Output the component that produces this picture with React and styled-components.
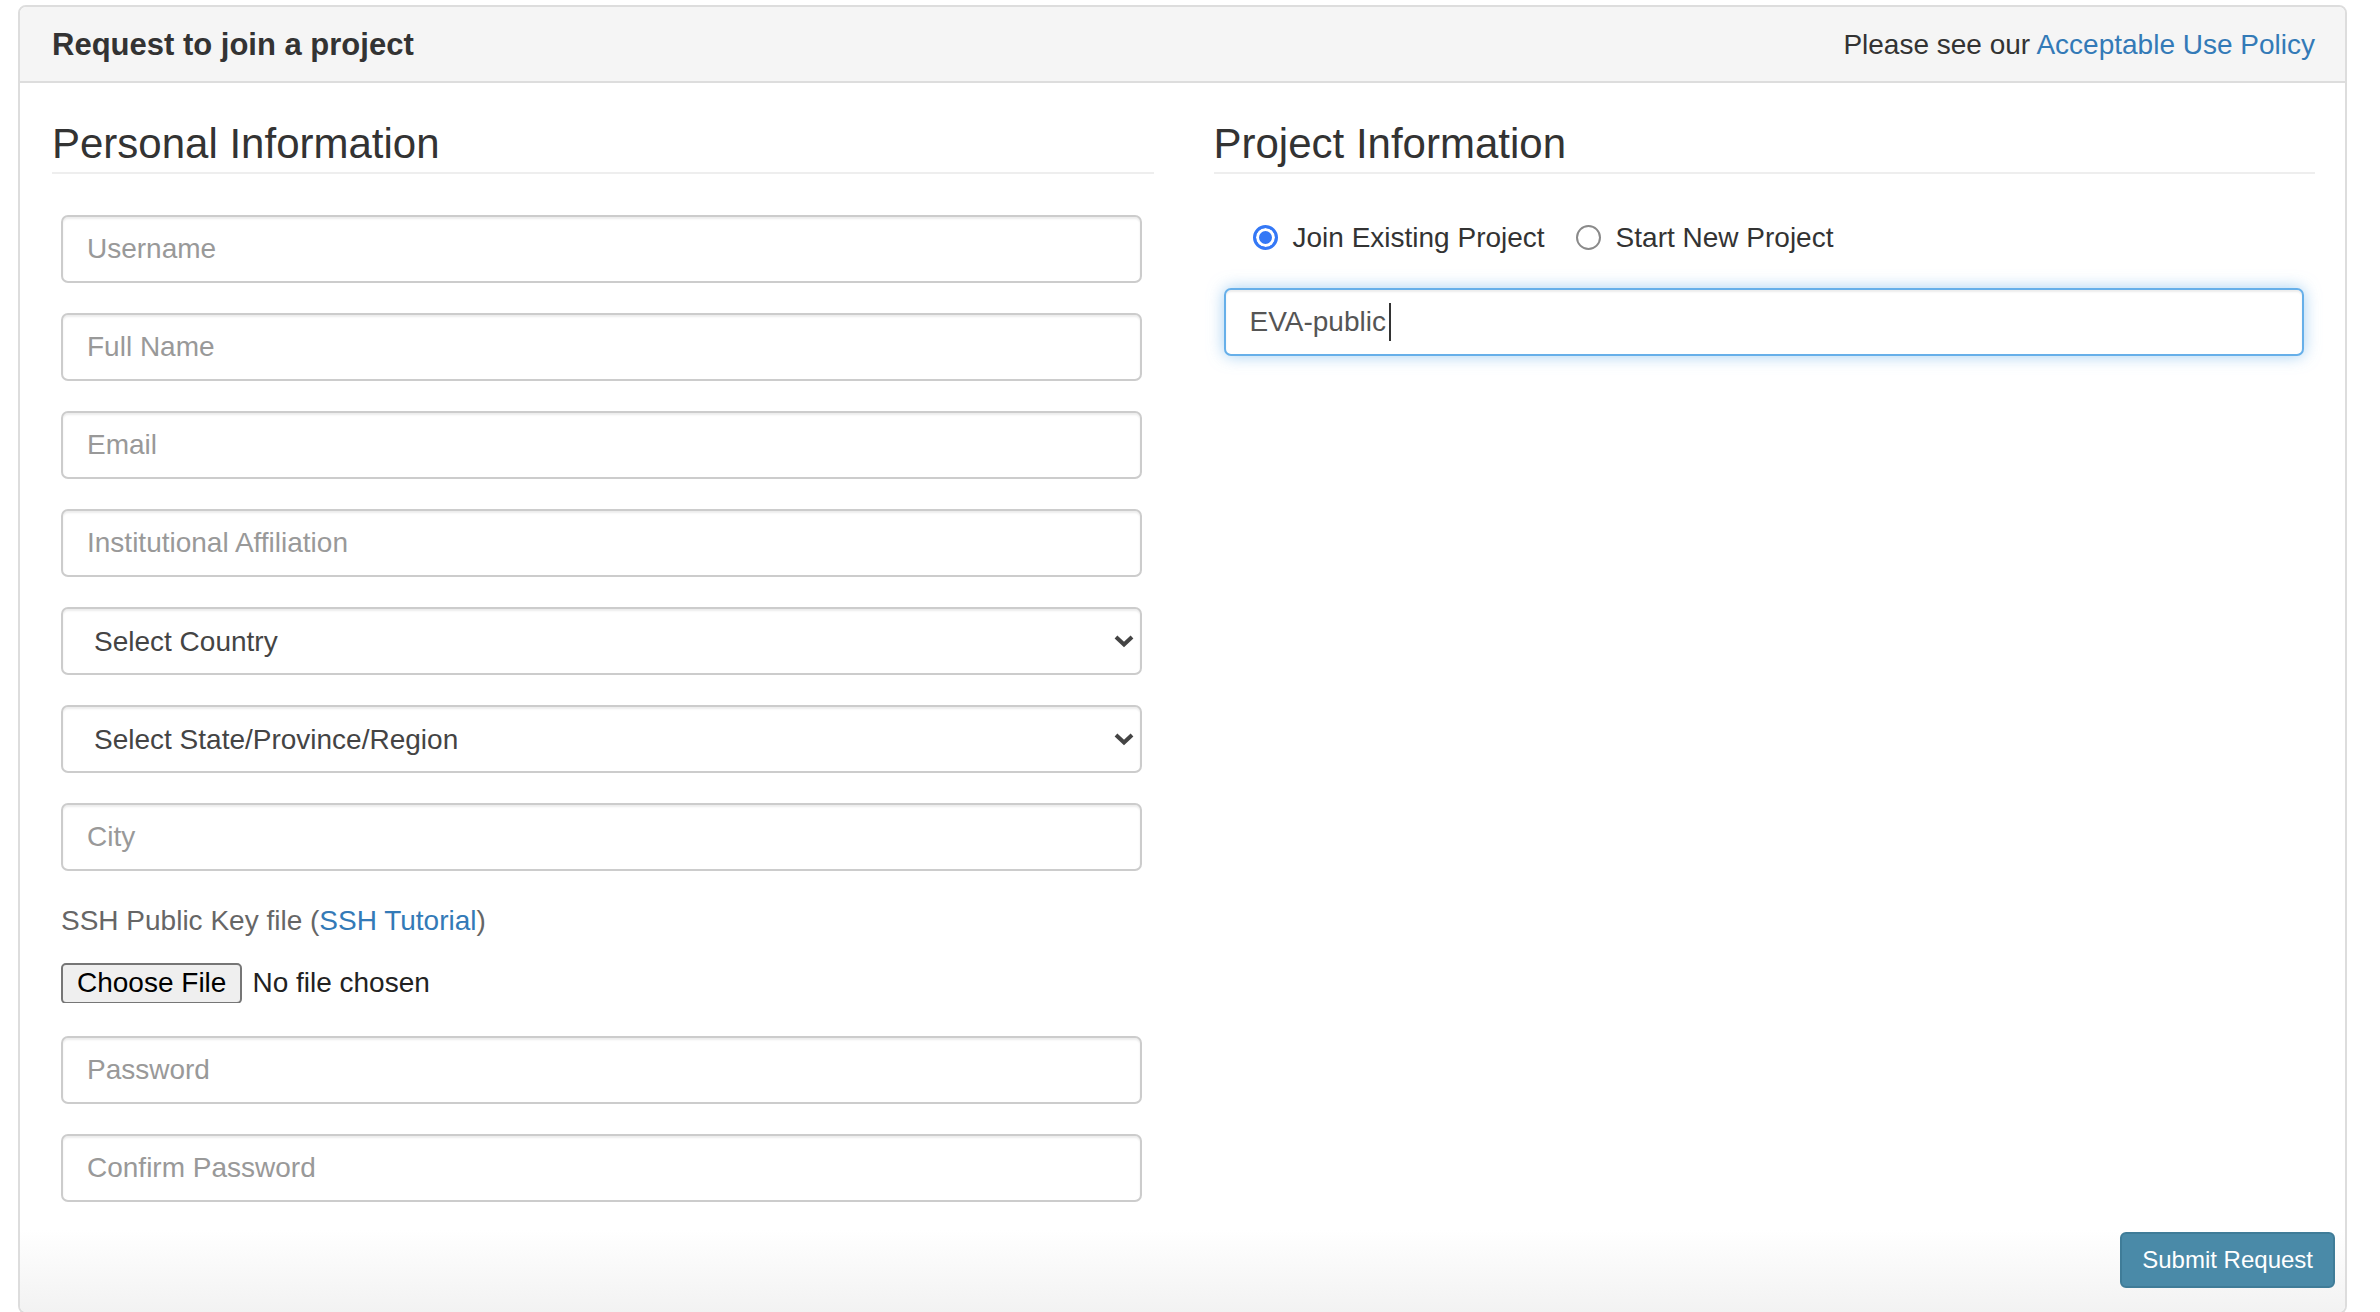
import styled, { createGlobalStyle } from 'styled-components';

const GlobalStyle = createGlobalStyle`
  html, body {
    margin: 0;
    height: 100%;
    overflow: hidden;
    background: #fff;
  }
  body {
    font-family: "Liberation Sans", Arial, Helvetica, sans-serif;
    font-size: 28px;
    line-height: 1.42857;
    color: #333;
  }
  * {
    box-sizing: border-box;
  }
`;

const Panel = styled.div`
  margin: 5px 33px 0 18px;
  height: calc(100vh - 3px);
  border: 2px solid #ddd;
  border-radius: 8px;
  display: flex;
  flex-direction: column;
  overflow: hidden;
`;

const PanelHeading = styled.div`
  display: flex;
  justify-content: space-between;
  align-items: center;
  padding: 21px 30px 19px 32px;
  background: #f5f5f5;
  border-bottom: 2px solid #ddd;
`;

const PanelTitle = styled.h3`
  margin: 0;
  font-size: 31px;
  line-height: 34px;
  font-weight: 700;
  color: #333;
`;

const PolicyNote = styled.div`
  font-size: 28px;
  line-height: 34px;
  color: #333;
`;

const Link = styled.a`
  color: #337ab7;
  text-decoration: none;
`;

const PanelBody = styled.div`
  flex: 1;
  display: grid;
  grid-template-columns: 1fr 1fr;
  column-gap: 60px;
  padding: 30px 30px 0 32px;
`;

const Column = styled.div`
  display: flex;
  flex-direction: column;
`;

const SectionTitle = styled.h3`
  margin: 8px 0 41px;
  padding-bottom: 5px;
  font-size: 42px;
  line-height: 46px;
  font-weight: 400;
  color: #333;
  border-bottom: 2px solid #eee;
`;

const FormGroup = styled.div`
  position: relative;
  margin-bottom: 30px;
  padding: ${(p) => p.$inset || '0 12px 0 9px'};

  &:last-child {
    margin-bottom: 0;
  }
`;

const TextInput = styled.input`
  display: block;
  width: 100%;
  height: 68px;
  padding: 12px 24px;
  font-family: inherit;
  font-size: 28px;
  color: #555;
  background: #fff;
  border: 2px solid ${(p) => (p.$active ? '#66afe9' : '#ccc')};
  border-radius: 7px;
  box-shadow: inset 0 2px 2px rgba(0, 0, 0, 0.075)
    ${(p) => (p.$active ? ', 0 0 16px rgba(102, 175, 233, 0.6)' : '')};
  outline: none;

  &::placeholder {
    color: #999;
    opacity: 1;
  }
`;

const Caret = styled.span`
  position: absolute;
  left: 175px;
  top: 15px;
  width: 2px;
  height: 38px;
  background: #333;
`;

const Select = styled.select`
  display: block;
  width: 100%;
  height: 68px;
  padding: 0 60px 0 31px;
  font-family: inherit;
  font-size: 28px;
  color: #444;
  background: #fff;
  border: 2px solid #ccc;
  border-radius: 7px;
  box-shadow: inset 0 2px 2px rgba(0, 0, 0, 0.075);
  appearance: none;
  outline: none;
`;

const Chevron = styled.svg`
  position: absolute;
  right: 20px;
  top: 27px;
  width: 20px;
  height: 14px;
  pointer-events: none;
`;

const FieldLabel = styled.label`
  display: block;
  margin-bottom: 10px;
  padding-left: 9px;
  font-size: 28px;
  line-height: 40px;
  color: #666;
  font-weight: 400;
`;

const FileRow = styled.div`
  padding: 11px 0 0 9px;
  margin-bottom: 33px;
`;

const FileInput = styled.input`
  display: block;
  height: 41px;
  font-family: "Liberation Sans", Arial, sans-serif;
  font-size: 28px;
  line-height: 41px;
  color: #222;

  &::file-selector-button {
    height: 41px;
    margin: 0 10px 0 0;
    padding: 0 14px;
    font-family: inherit;
    font-size: 28px;
    color: #000;
    background: #efefef;
    border: 2px solid #767676;
    border-radius: 5px;
  }
`;

const RadioRow = styled.div`
  display: flex;
  align-items: center;
  gap: 31px;
  margin: 3px 0 30px;
  padding-left: 39px;
  height: 40px;
`;

const RadioLabel = styled.label`
  display: flex;
  align-items: center;
  gap: 15px;
  font-size: 28px;
  color: #333;
`;

const Radio = styled.input`
  appearance: none;
  margin: 0;
  width: 25px;
  height: 25px;
  border-radius: 50%;
  border: 2px solid #8a8a8a;
  background: #fff;

  &:checked {
    border: 3px solid #3478f6;
    background: #3478f6;
    box-shadow: inset 0 0 0 3px #fff;
  }
`;

const PanelFooter = styled.div`
  display: flex;
  justify-content: flex-end;
  padding: 30px 10px 25px;
  background: linear-gradient(to bottom, #fff 25%, #f2f2f2);
`;

const SubmitButton = styled.button`
  height: 56px;
  padding: 0 20px;
  font-family: inherit;
  font-size: 24px;
  color: #fff;
  background: #4a8aa8;
  border: 2px solid #3f7c98;
  border-radius: 6px;
`;

const personalFields = ['Username', 'Full Name', 'Email', 'Institutional Affiliation'];

function SelectField({ label }) {
  return (
    <FormGroup>
      <Select defaultValue="">
        <option value="">{label}</option>
      </Select>
      <Chevron viewBox="0 0 20 14">
        <path d="M2 3 L10 10.5 L18 3" fill="none" stroke="#444" strokeWidth="4" />
      </Chevron>
    </FormGroup>
  );
}

export default function App() {
  return (
    <>
      <GlobalStyle />
      <Panel>
        <PanelHeading>
          <PanelTitle>Request to join a project</PanelTitle>
          <PolicyNote>
            Please see our <Link href="#">Acceptable Use Policy</Link>
          </PolicyNote>
        </PanelHeading>

        <PanelBody>
          <Column>
            <SectionTitle>Personal Information</SectionTitle>
            {personalFields.map((f) => (
              <FormGroup key={f}>
                <TextInput placeholder={f} />
              </FormGroup>
            ))}
            <SelectField label="Select Country" />
            <SelectField label="Select State/Province/Region" />
            <FormGroup>
              <TextInput placeholder="City" />
            </FormGroup>
            <FieldLabel>
              SSH Public Key file (<Link href="#">SSH Tutorial</Link>)
            </FieldLabel>
            <FileRow>
              <FileInput type="file" />
            </FileRow>
            <FormGroup>
              <TextInput type="password" placeholder="Password" />
            </FormGroup>
            <FormGroup>
              <TextInput type="password" placeholder="Confirm Password" />
            </FormGroup>
          </Column>

          <Column>
            <SectionTitle>Project Information</SectionTitle>
            <RadioRow>
              <RadioLabel>
                <Radio type="radio" name="mode" defaultChecked />
                Join Existing Project
              </RadioLabel>
              <RadioLabel>
                <Radio type="radio" name="mode" />
                Start New Project
              </RadioLabel>
            </RadioRow>
            <FormGroup $inset="0 11px 0 10px">
              <TextInput $active defaultValue="EVA-public" />
              <Caret />
            </FormGroup>
          </Column>
        </PanelBody>

        <PanelFooter>
          <SubmitButton>Submit Request</SubmitButton>
        </PanelFooter>
      </Panel>
    </>
  );
}
